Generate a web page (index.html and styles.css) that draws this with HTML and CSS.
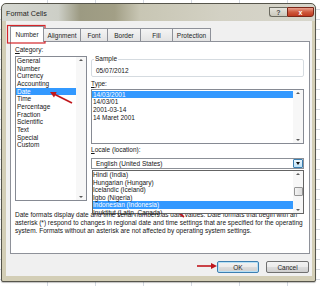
FILE: index.html
```html
<!DOCTYPE html>
<html lang="en">
<head>
  <meta charset="UTF-8">
  <meta name="viewport" content="width=device-width, initial-scale=1.0">
  <title>Format Cells</title>
  <link rel="stylesheet" href="styles.css">
</head>
<body>
  <div class="window">
    <div class="titlebar">
      <span class="title">Format Cells</span>
      <div class="caption-btns">
        <span class="cap-btn help">?</span>
        <span class="cap-btn close">x</span>
      </div>
    </div>

    <div class="client">
      <div class="tabs">
        <span class="tab active tab-number">Number</span>
        <span class="tab tab-alignment">Alignment</span>
        <span class="tab tab-font">Font</span>
        <span class="tab tab-border">Border</span>
        <span class="tab tab-fill">Fill</span>
        <span class="tab tab-protection">Protection</span>
      </div>

      <div class="panel">
        <div class="columns">
          <div class="col-left">
            <div class="label"><u>C</u>ategory:</div>
            <div class="listbox category-list">
              <ul class="items">
                <li>General</li>
                <li>Number</li>
                <li>Currency</li>
                <li>Accounting</li>
                <li class="selected">Date</li>
                <li>Time</li>
                <li>Percentage</li>
                <li>Fraction</li>
                <li>Scientific</li>
                <li>Text</li>
                <li>Special</li>
                <li>Custom</li>
              </ul>
              <div class="vscroll">
                <span class="arrow up"></span>
                <span class="arrow down"></span>
              </div>
            </div>
          </div>

          <div class="col-right">
            <fieldset class="sample">
              <legend>Sample</legend>
              <div class="sample-value">05/07/2012</div>
            </fieldset>

            <div class="label type-label"><u>T</u>ype:</div>
            <div class="listbox type-list">
              <ul class="items">
                <li class="selected">14/03/2001</li>
                <li>14/03/01</li>
                <li>2001-03-14</li>
                <li>14 Maret 2001</li>
              </ul>
              <div class="vscroll">
                <span class="arrow up"></span>
                <span class="arrow down"></span>
              </div>
            </div>

            <div class="label locale-label"><u>L</u>ocale (location):</div>
            <div class="combo">
              <span class="combo-text">English (United States)</span>
              <span class="combo-btn"><span class="arrow down dark"></span></span>

              <div class="dropdown">
                <ul class="items">
                  <li>Hindi (India)</li>
                  <li>Hungarian (Hungary)</li>
                  <li>Icelandic (Iceland)</li>
                  <li>Igbo (Nigeria)</li>
                  <li class="selected">Indonesian (Indonesia)</li>
                  <li>Inuktitut (Latin, Canada)</li>
                </ul>
                <div class="vscroll">
                  <span class="arrow up"></span>
                  <span class="thumb"></span>
                  <span class="arrow down"></span>
                </div>
              </div>
            </div>
          </div>
        </div>

        <p class="desc">
          Date formats display date and time serial numbers as date values. Date formats that begin with an<br>
          asterisk (*) respond to changes in regional date and time settings that are specified for the operating<br>
          system. Formats without an asterisk are not affected by operating system settings.
        </p>
      </div>

      <div class="buttons">
        <button class="btn default">OK</button>
        <button class="btn">Cancel</button>
      </div>
    </div>
  </div>

  <!-- red markup drawn over the screenshot -->
  <svg class="markup" width="320" height="286" viewBox="0 0 320 286">
    <rect x="7.5" y="25.5" width="37.5" height="17.5" fill="none" stroke="#d4262b" stroke-width="1.2"/>
    <line x1="72" y1="103" x2="54" y2="94" stroke="#c0161c" stroke-width="1.6"/>
    <polygon points="50,92 56.7,92 54,97.4" fill="#c0161c"/>
    <line x1="184" y1="217" x2="172" y2="207.5" stroke="#c0161c" stroke-width="1.6"/>
    <polygon points="169,205 175.6,206.4 171.8,211.1" fill="#c0161c"/>
    <line x1="197" y1="266" x2="212" y2="266" stroke="#c0161c" stroke-width="1.6"/>
    <polygon points="217,266 211,263 211,269" fill="#c0161c"/>
  </svg>
</body>
</html>
```

FILE: styles.css
```css
body {
  margin: 0;
  width: 320px;
  height: 286px;
  overflow: hidden;
  position: relative;
  font-family: 'Liberation Sans', Arial, sans-serif;
  font-size: 6.5px;
  color: #151515;
  background-color: #fff;
  background-image:
    repeating-linear-gradient(90deg, transparent 0 47px, #d4d9e2 47px 48px),
    repeating-linear-gradient(180deg, transparent 0 9px, #d4d9e2 9px 10px);
}

ul {
  list-style: none;
  margin: 0;
  padding: 0;
}

u {
  text-decoration-thickness: 0.5px;
}

/* window frame */
.window {
  box-sizing: border-box;
  width: 315px;
  height: 279px;
  margin: 3px 0 0 1px;
  padding: 0 3px 5px 4px;
  display: flex;
  flex-direction: column;
  border: 1px solid #56554b;
  border-radius: 5px 5px 2px 2px;
  background:
    linear-gradient(90deg, #d5d7d1 0, #cdcfc7 18%, #9c9a82 25%, #a29f86 36%, #c8c6b4 44%, #d3d1c4 70%, #d7d6cc 100%) top / 100% 17px no-repeat,
    #d3ceb6;
  box-shadow: 0 1px 1px rgba(0, 0, 0, 0.25);
}

.titlebar {
  height: 17px;
  display: flex;
  align-items: flex-start;
  justify-content: space-between;
}

.title {
  padding-top: 6px;
  font-size: 7.2px;
  line-height: 8px;
  color: #1e1e1e;
}

.caption-btns {
  display: flex;
  margin-top: 3px;
  margin-right: -2px;
}

.cap-btn {
  box-sizing: border-box;
  height: 10px;
  display: flex;
  align-items: center;
  justify-content: center;
  border: 1px solid #6b6a60;
  font-weight: bold;
  font-size: 7px;
}

.help {
  width: 18px;
  border-right: none;
  border-radius: 0 0 0 3px;
  color: #4a4a4a;
  background: linear-gradient(#e6e5de, #c9c7bb);
}

.close {
  width: 27px;
  border-color: #7a2618;
  border-radius: 0 0 3px 0;
  color: #fff;
  background: linear-gradient(#e8a08d, #cf5a3f 50%, #bf3a1f);
}

/* client area */
.client {
  flex: 1;
  background: #f0f0f0;
  padding: 5px 2px 0 4px;
  display: flex;
  flex-direction: column;
}

.tabs {
  display: flex;
  align-items: flex-end;
  height: 15px;
  position: relative;
  z-index: 1;
}

.tab {
  box-sizing: border-box;
  height: 13px;
  display: flex;
  align-items: center;
  justify-content: center;
  border: 1px solid #8e9199;
  border-bottom: none;
  border-left: none;
  background: linear-gradient(#f4f4f4, #e3e3e3);
  color: #1e1e1e;
}

.tab.active {
  height: 16px;
  margin-bottom: -1px;
  border-left: 1px solid #8e9199;
  background: #fff;
  padding-bottom: 1px;
}

.tab-number { width: 34px; }
.tab-alignment { width: 37px; }
.tab-font { width: 27px; }
.tab-border { width: 33px; }
.tab-fill { width: 32px; }
.tab-protection { width: 38px; }

.panel {
  box-sizing: border-box;
  height: 213px;
  padding: 4px 5px 0 4px;
  border: 1px solid #8e9199;
  background: #fff;
}

.columns {
  display: flex;
  gap: 4px;
}

.col-left {
  width: 72px;
}

.col-right {
  width: 213px;
  margin-top: 9px;
}

.label {
  line-height: 8px;
}

.type-label {
  margin-top: 3px;
}

.locale-label {
  margin-top: 2px;
}

/* list boxes */
.listbox {
  box-sizing: border-box;
  display: flex;
  border: 1px solid #868a93;
  background: #fff;
}

.items {
  flex: 1;
}

.items li {
  padding-left: 1px;
  white-space: nowrap;
}

.items li.selected {
  background: #3399ff;
  color: #fff;
}

.category-list {
  height: 145px;
  margin-top: 2px;
}

.category-list .items li {
  line-height: 7.65px;
}

.type-list {
  height: 55px;
  margin-top: 1px;
}

.type-list .items {
  padding-top: 0.5px;
}

.type-list .items li {
  line-height: 7.85px;
}

.vscroll {
  width: 10px;
  display: flex;
  flex-direction: column;
  justify-content: space-between;
  align-items: center;
  background: #f7f7f7;
  padding: 2px 0;
}

.arrow {
  display: block;
  width: 0;
  height: 0;
  border-left: 2.5px solid transparent;
  border-right: 2.5px solid transparent;
}

.arrow.up {
  border-bottom: 2.5px solid #5a5a5a;
}

.arrow.down {
  border-top: 2.5px solid #5a5a5a;
}

.arrow.dark {
  border-left-width: 2.5px;
  border-right-width: 2.5px;
  border-top: 3px solid #111;
}

/* sample group */
.sample {
  margin: 0;
  padding: 3.5px 4px 1.5px;
  border: 1px solid #d5dbe0;
  border-radius: 2px;
}

.sample legend {
  padding: 0 1px;
  margin-left: -2px;
  line-height: 8px;
}

.sample-value {
  line-height: 8px;
}

/* locale combo with open list */
.combo {
  box-sizing: border-box;
  height: 11px;
  margin-top: 4px;
  position: relative;
  display: flex;
  align-items: center;
  justify-content: space-between;
  border: 1px solid #8c9097;
  background: #fff;
}

.combo-text {
  padding-left: 4px;
}

.combo-btn {
  box-sizing: border-box;
  width: 10px;
  height: 9px;
  display: flex;
  align-items: center;
  justify-content: center;
  border: 1px solid #3c7fb1;
  border-radius: 1px;
  background: linear-gradient(#eaf6fd, #bfe3f8);
}

.dropdown {
  position: absolute;
  top: 11px;
  left: 0;
  right: -1px;
  height: 44px;
  box-sizing: border-box;
  display: flex;
  border: 1px solid #646464;
  background: #fff;
  z-index: 2;
}

.dropdown .items li {
  line-height: 7.5px;
  padding-left: 0;
}

.dropdown .vscroll {
  justify-content: flex-start;
}

.dropdown .vscroll .arrow.down {
  margin-top: auto;
}

.thumb {
  box-sizing: border-box;
  width: 9px;
  height: 9px;
  margin-top: 12px;
  border: 1px solid #959595;
  border-radius: 1px;
  background: linear-gradient(90deg, #f4f4f4, #dcdcdc);
}

.desc {
  margin: 10px 0 0;
  line-height: 8px;
}

/* buttons */
.buttons {
  display: flex;
  justify-content: flex-end;
  gap: 7px;
  margin-top: 7px;
  padding-right: 1px;
}

.btn {
  box-sizing: border-box;
  height: 12px;
  padding: 0;
  font-family: inherit;
  font-size: 6.5px;
  color: #1e1e1e;
  border: 1px solid #707070;
  border-radius: 2px;
  background: linear-gradient(#f2f2f2 0, #ebebeb 50%, #dddddd 50%, #cfcfcf 100%);
}

.btn.default {
  width: 42px;
  border-color: #3c7fb1;
  box-shadow: inset 0 0 0 1px #b7e0f5;
}

.btn:not(.default) {
  width: 43px;
}

.markup {
  position: absolute;
  top: 0;
  left: 0;
  pointer-events: none;
}
```
